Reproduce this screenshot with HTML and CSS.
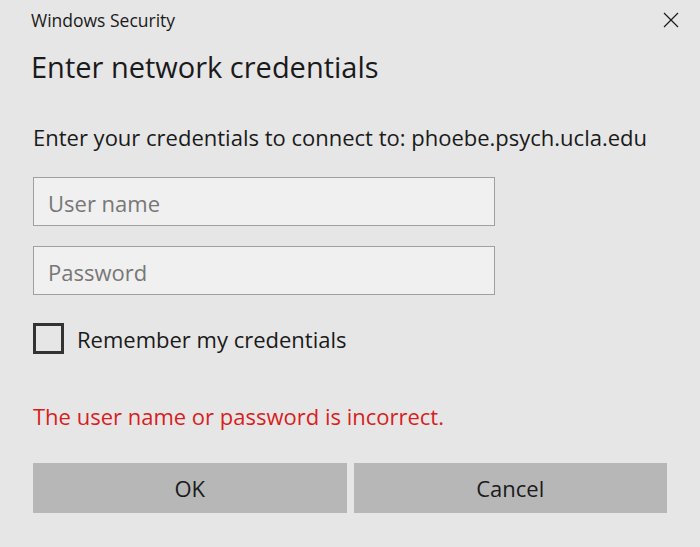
FILE: index.html
```html
<!DOCTYPE html>
<html>
<head>
<meta charset="utf-8">
<link rel="stylesheet" href="styles.css">
</head>
<body>
<div class="dialog">
  <div class="titlebar">
    <span class="app">Windows Security</span>
    <button class="close" aria-label="Close">
      <svg width="16" height="16" viewBox="0 0 16 16"><path d="M1 1 L15 15 M15 1 L1 15" stroke="#1a1a1a" stroke-width="1.2" fill="none"/></svg>
    </button>
  </div>
  <h1 class="heading">Enter network credentials</h1>
  <p class="desc">Enter your credentials to connect to: phoebe.psych.ucla.edu</p>
  <div class="field"><span class="placeholder">User name</span></div>
  <div class="field"><span class="placeholder">Password</span></div>
  <label class="remember"><span class="box"></span><span>Remember my credentials</span></label>
  <p class="error">The user name or password is incorrect.</p>
  <div class="buttons">
    <button class="btn">OK</button>
    <button class="btn">Cancel</button>
  </div>
</div>
</body>
</html>
```

FILE: styles.css
```css
html, body {
  margin: 0;
  padding: 0;
  background: #e6e6e6;
}
body {
  width: 700px;
  height: 547px;
  overflow: hidden;
  font-family: "Open Sans", "Noto Sans", "Liberation Sans", sans-serif;
  color: #1a1a1a;
}
.dialog {
  display: flex;
  flex-direction: column;
  padding: 0 33px;
}
.titlebar {
  display: flex;
  justify-content: space-between;
  align-items: center;
  height: 40px;
  margin-left: -2px;
  margin-right: -12px;
}
.app {
  font-size: 17.5px;
}
.close {
  border: none;
  background: transparent;
  padding: 0;
  width: 16px;
  height: 16px;
  display: flex;
}
.heading {
  margin: 9px 0 0 -2px;
  font-weight: 400;
  font-size: 29px;
  line-height: 36px;
}
.desc {
  margin: 37px 0 0 0;
  font-size: 22px;
  line-height: 30px;
}
.field {
  width: 462px;
  height: 49px;
  border: 1px solid #a0a0a0;
  background: #f0f0f0;
  display: flex;
  align-items: center;
  padding: 2px 0 0 14px;
  box-sizing: border-box;
  margin-top: 25px;
}
.field + .field { margin-top: 20px; }
.placeholder {
  font-size: 22px;
  line-height: 30px;
  color: #777;
}
.remember {
  display: flex;
  align-items: center;
  margin-top: 28px;
  font-size: 22px;
  line-height: 30px;
}
.box {
  width: 31px;
  height: 31px;
  box-sizing: border-box;
  border: 3px solid #333;
  margin-right: 13px;
}
.error {
  margin: 47px 0 0 0;
  color: #d81e1e;
  font-size: 22px;
  line-height: 30px;
}
.buttons {
  display: flex;
  gap: 7px;
  margin-top: 32px;
}
.btn {
  width: 314px;
  height: 50px;
  border: none;
  background: #b7b7b7;
  font-family: inherit;
  font-size: 22px;
  line-height: 30px;
  color: #1a1a1a;
  padding: 0;
}
```
